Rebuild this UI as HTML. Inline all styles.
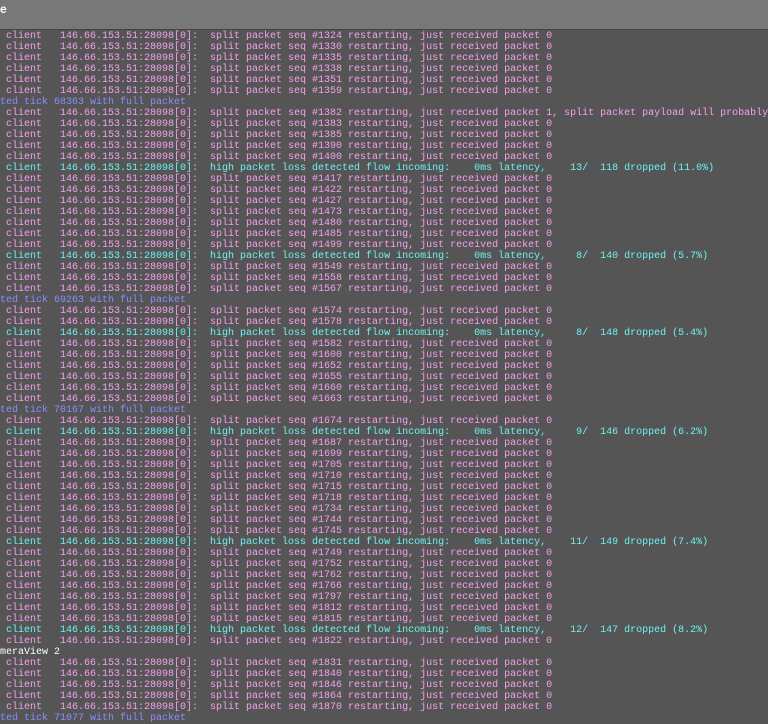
<!DOCTYPE html>
<html><head><meta charset="utf-8"><style>
html,body{margin:0;padding:0;width:768px;height:715px;overflow:hidden;background:#555555;}
#t{position:absolute;left:0;top:0;width:768px;height:29px;background:#787878;border-bottom:1px solid #444;}
#t span{position:absolute;left:0;top:2px;color:#fff;font:bold 12px "Liberation Sans",sans-serif;}
#c{position:absolute;left:0;top:31px;font:10px/11px "Liberation Mono",monospace;white-space:pre;color:#f4a0ec;}
.h{color:#70f0f0}.b{color:#8c8cff}.w{color:#fff}
</style></head><body>
<div id="t"><span>e</span></div>
<div id="c"><script>
var P=" client   146.66.153.51:28098[0]:  ";
function s(n,x){return P+"split packet seq #"+n+" restarting, just received packet "+(x||"0");}
function h(a,b,p){var A=(""+a),B=(""+b);while(A.length<4)A=" "+A;while(B.length<5)B=" "+B;return '<span class="h">'+P+"high packet loss detected flow incoming:    0ms latency,  "+A+"/"+B+" dropped ("+p+"%)</span>";}
function t(x){return '<span class="b">ted tick '+x+' with full packet</span>';}
var L=[];
[1324,1330,1335,1338,1351,1359].forEach(function(n){L.push(s(n))});
L.push(t(68363));
L.push(s(1382,"1, split packet payload will probably"));
[1383,1385,1390,1400].forEach(function(n){L.push(s(n))});
L.push(h(13,118,"11.0"));
[1417,1422,1427,1473,1480,1485,1499].forEach(function(n){L.push(s(n))});
L.push(h(8,140,"5.7"));
[1549,1558,1567].forEach(function(n){L.push(s(n))});
L.push(t(69263));
[1574,1578].forEach(function(n){L.push(s(n))});
L.push(h(8,148,"5.4"));
[1582,1600,1652,1655,1660,1663].forEach(function(n){L.push(s(n))});
L.push(t(70167));
L.push(s(1674));
L.push(h(9,146,"6.2"));
[1687,1699,1705,1710,1715,1718,1734,1744,1745].forEach(function(n){L.push(s(n))});
L.push(h(11,149,"7.4"));
[1749,1752,1762,1766,1797,1812,1815].forEach(function(n){L.push(s(n))});
L.push(h(12,147,"8.2"));
L.push(s(1822));
L.push('<span class="w">meraView 2</span>');
[1831,1840,1846,1864,1870].forEach(function(n){L.push(s(n))});
L.push(t(71077));
document.write(L.join("\n"));
</script></div>
</body></html>
